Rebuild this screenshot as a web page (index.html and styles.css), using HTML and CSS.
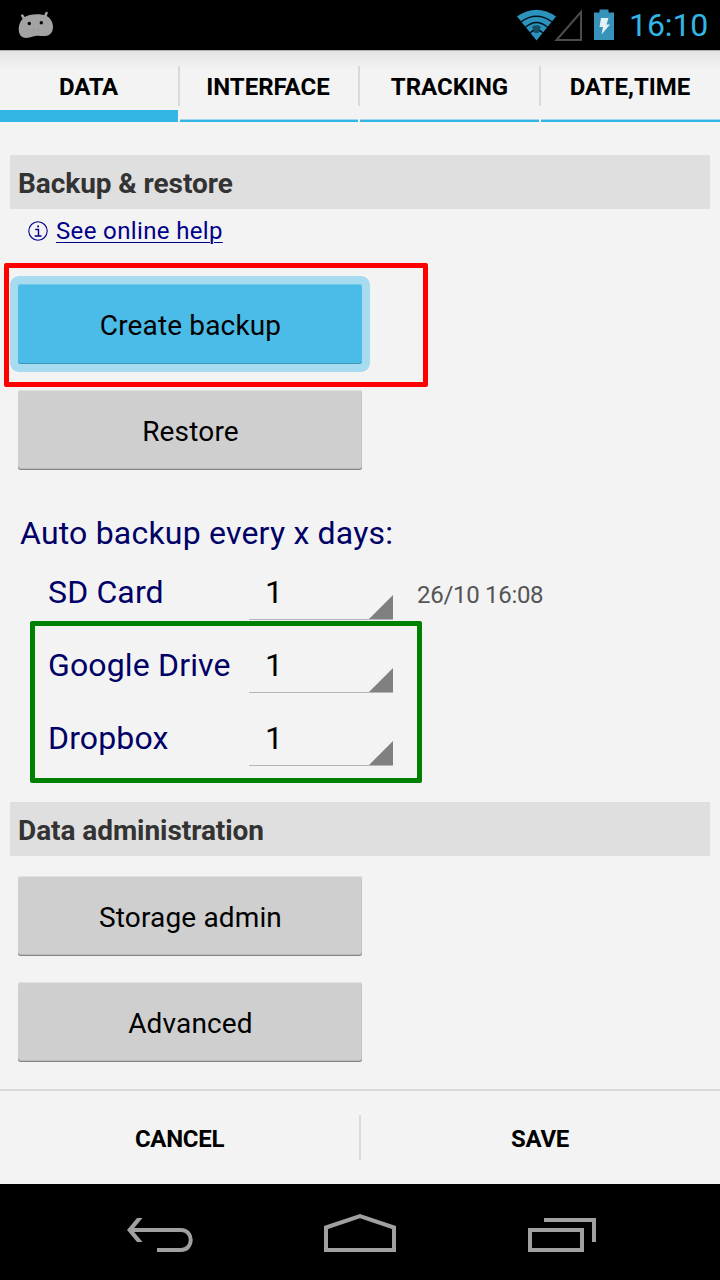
FILE: index.html
```html
<!DOCTYPE html>
<html lang="en">
<head>
<meta charset="utf-8">
<title>Settings</title>
<link rel="stylesheet" href="styles.css">
</head>
<body>
<div class="screen">
  <header class="status">
    <svg class="android" width="36" height="28" viewBox="0 0 36 28">
      <path d="M4.200 4.500L7 9M28.500 2L26.500 7" stroke="#a3a3a3" stroke-width="2.600" stroke-linecap="round"/>
      <path d="M6 6.500C11 3 21 2.500 27.500 4.500C32 6 35 11 35 16C35 22 31 25 27 25C21 25 18.500 24 15 25.500C11 27 5 28 2.500 24.500C0 21 .500 15 2 12C3 9.500 4 8 6 6.500Z" fill="#a3a3a3"/>
      <circle cx="11.300" cy="12.500" r="1.700"/><circle cx="23.300" cy="11.700" r="1.700"/>
      <path d="M15.500 17v4M20.500 17v3" stroke="#929292" stroke-width="1" stroke-dasharray="1 1"/>
    </svg>
    <div class="indicators">
      <svg class="wifi" width="67" height="32" viewBox="0 0 67 32">
        <path d="M0 7.500Q19.500-6 39 7.500L19.500 31.500Z" fill="#2b93be"/>
        <g fill="none" stroke="#03131b" stroke-width="1.500">
          <path d="M4 12.800Q19.500 1.700 35 12.800"/>
          <path d="M8.500 18.300Q19.500 8.700 30.500 18.300"/>
          <path d="M12.800 24Q19.500 17.800 26.200 24"/>
        </g>
        <path d="M15 17.700Q19.500 15 24 17.700L21.500 24h-4z" fill="#174e65"/>
        <path d="M64 3V31H39.500Z" fill="none" stroke="#4c4c4c" stroke-width="2"/>
      </svg>
      <svg class="battery" width="20" height="32" viewBox="0 0 20 32">
        <path d="M0 3.500h5.500V.500h9v3H20V31H0Z" fill="#3793b9"/>
        <path d="M7 9h7.500l-2 6.500H16L7.500 25.500L9 18H5.500Z" fill="#e3f2f8"/>
      </svg>
      <span class="clock">16:10</span>
    </div>
  </header>

  <nav class="tabs">
    <div class="tab active"><span class="t-data">DATA</span></div>
    <div class="tab"><span class="t-interface">INTERFACE</span></div>
    <div class="tab"><span class="t-tracking">TRACKING</span></div>
    <div class="tab"><span class="t-date">DATE,TIME</span></div>
  </nav>

  <main class="content">
    <h2 class="section"><span>Backup &amp; restore</span></h2>
    <div class="help">
      <svg width="20" height="20" viewBox="0 0 20 20" fill="none" stroke="#00008b">
        <circle cx="10" cy="10" r="9.200" stroke-width="1.100"/>
        <path d="M7.300 8.500h3.200v6.500M6.700 15h6.800" stroke-width="1.400"/>
        <path d="M9.200 5.300h1.800" stroke-width="1.800"/>
      </svg>
      <a class="link">See online help</a>
    </div>
    <div class="buttons">
      <div class="button focused"><span>Create backup</span></div>
      <div class="button"><span>Restore</span></div>
    </div>
    <h3 class="auto"><span>Auto backup every x days:</span></h3>
    <div class="row"><span class="name">SD Card</span><div class="spinner"><span>1</span></div><span class="date">26/10 16:08</span></div>
    <div class="row"><span class="name">Google Drive</span><div class="spinner"><span>1</span></div></div>
    <div class="row"><span class="name">Dropbox</span><div class="spinner"><span>1</span></div></div>
    <h2 class="section data"><span>Data administration</span></h2>
    <div class="buttons admin">
      <div class="button"><span>Storage admin</span></div>
      <div class="button"><span>Advanced</span></div>
    </div>
  </main>

  <footer class="actions">
    <div class="action"><span class="cancel">CANCEL</span></div>
    <i class="divider"></i>
    <div class="action"><span class="save">SAVE</span></div>
  </footer>

  <nav class="navbar">
    <svg width="720" height="96" viewBox="0 0 720 96" fill="none" stroke="#a0a0a0" stroke-width="4">
      <path d="M130 46H181C194 46 194 66 181 66H157"/>
      <path d="M127 46L137 34H142.500L132.500 46L142.500 58H137Z" fill="#a0a0a0" stroke="none"/>
      <path d="M326 43.500L360 32L394 43.500V66H326Z"/>
      <path d="M530 46H582V66H530ZM544 36H594V58"/>
    </svg>
  </nav>
  <div class="mark red"></div>
  <div class="mark green"></div>
</div>
</body>
</html>
```

FILE: styles.css
```css
* { box-sizing: border-box; }
body { margin: 0; background: #f3f3f3; font-family: Roboto, "Liberation Sans", sans-serif; color: #000; }
h2, h3 { margin: 0; }
span, a { white-space: nowrap; }
svg { display: block; flex: none; }
.screen { position: relative; width: 720px; height: 1280px; display: flex; flex-direction: column; overflow: hidden; }
.status { height: 50px; flex: none; background: #000; display: flex; justify-content: space-between; padding: 0 13px 0 18px; }
.android { margin-top: 11px; }
.indicators { display: flex; }
.wifi { margin: 9px 10px 0 0; }
.battery { margin: 9px 15px 0 0; }
.clock { color: #33b5e5; font-size: 32px; line-height: 51px; width: 78px; letter-spacing: -.1px; }
.tabs { height: 72px; flex: none; display: grid; grid-template-columns: 178px 178px 179px 179px; grid-template-rows: 72px; column-gap: 2px; background: linear-gradient(#b0b0b0 0, #b0b0b0 1px, #e4e4e4 1px, #f3f3f3 20px); }
.tab { position: relative; display: flex; justify-content: center; line-height: 74px; font-size: 24px; font-weight: 700; border-bottom: 2px solid #33b5e5; box-shadow: inset 0 -1px #a0d9ee; }
.tab.active { border-bottom-width: 12px; box-shadow: none; }
.tab:not(:last-child)::after { content: ""; position: absolute; left: 100%; top: 16px; width: 2px; height: 40px; background: #dadada; }
.t-data { letter-spacing: -.2px; margin-right: 1px; }
.t-interface { margin-right: 2px; }
.t-date { margin-right: 1px; }
.content { height: 967px; flex: none; padding: 33px 10px 0; }
.section { height: 54px; background: #dfdfdf; padding-left: 8px; line-height: 57px; font-size: 28px; font-weight: 700; letter-spacing: -.06px; color: #333; }
.help { height: 67px; display: flex; gap: 8px; padding-left: 18px; }
.help svg { margin-top: 12px; }
.link { font-size: 24px; line-height: 44px; letter-spacing: .36px; color: #00008b; text-decoration: underline; text-decoration-thickness: 1px; text-underline-offset: 3px; }
.buttons { display: flex; flex-direction: column; gap: 26px; padding: 8px 0 0 8px; }
.button { width: 344px; height: 80px; display: flex; justify-content: center; padding-left: 1px; line-height: 83px; font-size: 28px; letter-spacing: .15px; background: #cfcfcf; border-radius: 3px; box-shadow: inset 0 -1px #858585, inset 0 -2px #bcbcbc, inset 0 1px #e1e1e1, inset -1px 0 #c2c2c2; }
.button.focused { background: #4bbce8; box-shadow: 0 0 0 8px #a7dbf0, inset 0 -1px #4395b4, inset 0 1px #6cc9ec; }
.auto { margin: 30px 0 0 10px; height: 56px; line-height: 66px; font-size: 32px; font-weight: 400; letter-spacing: .2px; color: #000066; }
.row { height: 73px; display: flex; padding-left: 38px; font-size: 32px; line-height: 72px; }
.name { width: 201px; letter-spacing: .15px; color: #000066; }
.spinner { position: relative; width: 144px; height: 64px; padding-left: 16px; border-bottom: 1px solid #b5b5b5; }
.spinner::after { content: ""; position: absolute; right: 0; bottom: 0; width: 24px; height: 24px; background: #808080; clip-path: polygon(100% 0, 100% 100%, 0 100%); }
.date { margin-left: 24px; font-size: 24px; line-height: 78px; letter-spacing: -.3px; color: #555; }
.data { margin-top: 27px; }
.admin { padding-top: 20px; }
.actions { height: 95px; flex: none; border-top: 2px solid #dadada; display: flex; }
.action { flex: 1; display: flex; justify-content: center; line-height: 96px; font-size: 24px; font-weight: 700; }
.cancel { letter-spacing: -.3px; }
.save { letter-spacing: -.3px; margin-right: 1px; }
.divider { width: 2px; height: 45px; margin-top: 24px; background: #dadada; }
.navbar { height: 96px; flex: none; background: #000; }
.mark { position: absolute; border: 5px solid; border-radius: 2px; }
.red { left: 4px; top: 263px; width: 424px; height: 124px; border-color: #f00; }
.green { left: 30px; top: 621px; width: 392px; height: 162px; border-color: #008000; }
```
